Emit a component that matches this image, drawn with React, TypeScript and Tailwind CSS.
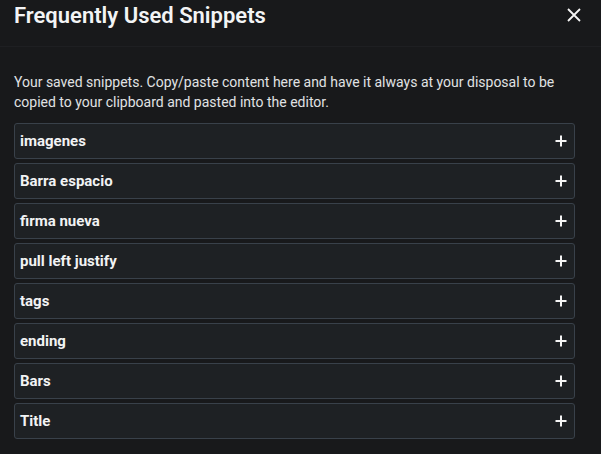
const snippets = [
  "imagenes",
  "Barra espacio",
  "firma nueva",
  "pull left justify",
  "tags",
  "ending",
  "Bars",
  "Title",
];

function PlusIcon() {
  return (
    <svg width="12" height="12" viewBox="0 0 12 12" className="shrink-0">
      <path d="M6 0.5V11.5M0.5 6H11.5" stroke="#f5f5f5" strokeWidth="2" />
    </svg>
  );
}

function CloseIcon() {
  return (
    <svg width="14" height="14" viewBox="0 0 14 14">
      <path d="M1 1L13 13M13 1L1 13" stroke="#f5f5f5" strokeWidth="1.8" />
    </svg>
  );
}

export default function App() {
  return (
    <div
      className="w-[601px] h-[454px] overflow-hidden bg-[#18191b] text-[#e4e6e8]"
      style={{ fontFamily: "Roboto, 'Noto Sans', sans-serif" }}
    >
      {/* Header */}
      <div className="flex h-[47px] items-start justify-between border-b border-[#1e1f22] pl-[14px] pr-[20px]">
        <h2 className="pt-[1px] text-[22px] font-semibold leading-[30px] text-[#f3f4f5]">
          Frequently Used Snippets
        </h2>
        <button className="mt-[8px] flex h-[14px] w-[14px] items-center justify-center">
          <CloseIcon />
        </button>
      </div>

      {/* Body */}
      <div className="px-[14px] pt-[25px]">
        <p className="mb-[11px] text-[14px] leading-[20px] text-[#e0e2e4]">
          Your saved snippets. Copy/paste content here and have it always at
          your disposal to be copied to your clipboard and pasted into the
          editor.
        </p>

        <div className="flex w-[561px] flex-col gap-[4px]">
          {snippets.map((name) => (
            <div
              key={name}
              className="flex h-[36px] items-center justify-between rounded-[3px] border border-[#39414a] bg-[#1e2124] pl-[5px] pr-[7px]"
            >
              <span className="text-[15px] font-bold text-[#f2f3f4]">
                {name}
              </span>
              <PlusIcon />
            </div>
          ))}
        </div>
      </div>
    </div>
  );
}
